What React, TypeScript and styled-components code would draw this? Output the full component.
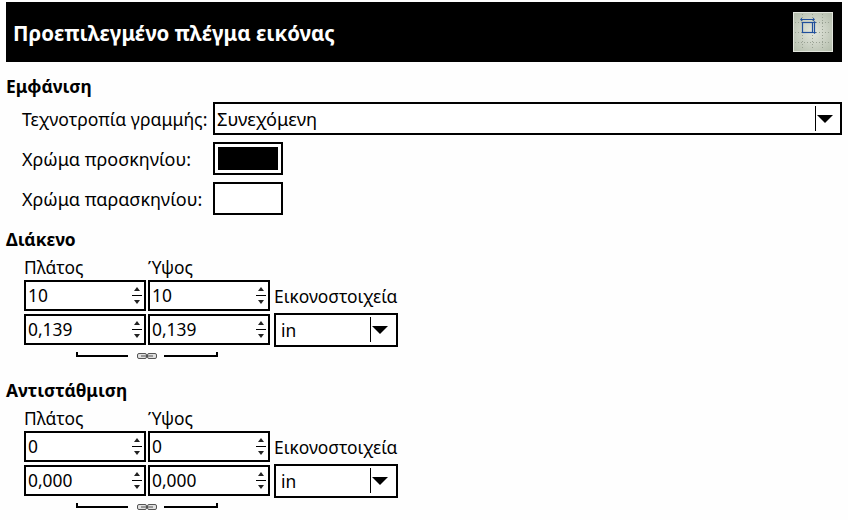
import * as React from 'react'
import styled, { createGlobalStyle } from 'styled-components'

const GlobalStyle = createGlobalStyle`
  html, body {
    margin: 0;
    padding: 0;
    background: #fefefe;
  }
  body {
    font-family: "Noto Sans", "DejaVu Sans", sans-serif;
    font-size: 17.4px;
    color: #000;
  }
`

const Page = styled.div`
  width: 848px;
  height: 520px;
  overflow: hidden;
  padding: 2px 6px 0;
  box-sizing: border-box;
`
const Header = styled.div`
  height: 60px;
  background: #000;
  display: flex;
  align-items: center;
  justify-content: space-between;
  padding: 0 9px 0 7px;
`
const HeaderTitle = styled.div`
  color: #fff;
  font-size: 20.5px;
  font-weight: 700;
  margin-top: 2px;
`
const SectionTitle = styled.div`
  font-weight: 700;
  font-size: 17.4px;
  line-height: 20px;
`
const Appearance = styled.div`
  margin-top: 14px;
`
const FormGrid = styled.div`
  display: grid;
  grid-template-columns: 191px 1fr;
  row-gap: 7px;
  margin-top: 6px;
  padding-left: 16px;
  align-items: center;
`
const FieldLabel = styled.div<{ $wide?: boolean }>`
  line-height: 20px;
  font-size: ${p => (p.$wide ? 18 : 17.6)}px;
`
const Combo = styled.div<{ $small?: boolean }>`
  height: ${p => (p.$small ? 34 : 33)}px;
  box-sizing: border-box;
  border: 2px solid #000;
  display: flex;
  align-items: center;
  justify-content: space-between;
  padding-left: ${p => (p.$small ? 5 : 2)}px;
  padding-right: ${p => (p.$small ? 8 : 7)}px;
  background: #fff;
  font-size: ${p => (p.$small ? 17.4 : 18.2)}px;
`
const ComboArrow = styled.div`
  display: flex;
  align-items: center;
  gap: 1px;
`
const ComboSep = styled.div`
  width: 1px;
  height: 25px;
  background: #000;
`
const Triangle = styled.div`
  width: 0;
  height: 0;
  border-left: 8px solid transparent;
  border-right: 8px solid transparent;
  border-top: 8px solid #000;
`
const ColorButton = styled.div<{ $dark?: boolean }>`
  width: 70px;
  height: 33px;
  box-sizing: border-box;
  border: 2px solid #000;
  padding: 3px;
  background: #fff;
  &::after {
    content: '';
    display: block;
    height: 100%;
    background: ${p => (p.$dark ? '#000' : '#fff')};
  }
`
const Section = styled.div<{ $top: number }>`
  margin-top: ${p => p.$top}px;
`
const SizeGrid = styled.div`
  display: grid;
  grid-template-columns: 124px 124px 126px;
  grid-template-rows: 20px 31px 31px;
  row-gap: 3px;
  margin-top: 8px;
  padding-left: 18px;
  align-items: center;
`
const ColumnLabel = styled.div`
  line-height: 20px;
`
const Spin = styled.div`
  width: 122px;
  height: 31px;
  box-sizing: border-box;
  border: 2px solid #000;
  display: flex;
  align-items: center;
  justify-content: space-between;
  padding-left: 2px;
  padding-right: 2px;
  background: #fff;
`
const SpinValue = styled.span`
  line-height: 20px;
  margin-top: -2px;
`
const SpinButtons = styled.div`
  display: flex;
  flex-direction: column;
  align-items: center;
  width: 10px;
  gap: 4px;
`
const SpinUp = styled.div`
  border-left: 3px solid transparent;
  border-right: 3px solid transparent;
  border-bottom: 4px solid #222;
`
const SpinDown = styled.div`
  border-left: 3px solid transparent;
  border-right: 3px solid transparent;
  border-top: 4px solid #222;
`
const SpinLine = styled.div`
  width: 10px;
  height: 1px;
  background: #000;
`
const UnitLabel = styled.div`
  line-height: 20px;
  margin-left: 2px;
  white-space: nowrap;
`
const UnitCell = styled.div`
  margin-left: 2px;
  width: 124px;
`
const ChainRow = styled.div`
  display: flex;
  align-items: center;
  width: 142px;
  margin: 7px 0 0 70px;
`
const ChainLine = styled.div<{ $side: 'left' | 'right' }>`
  flex: 0 0 ${p => (p.$side === 'left' ? 52 : 54)}px;
  height: 5px;
  box-sizing: border-box;
  border-bottom: 2px solid #000;
  ${p => (p.$side === 'left' ? 'border-left: 2px solid #000;' : 'border-right: 2px solid #000;')}
  margin-bottom: 3px;
`
const ChainIcon = styled.svg`
  width: 20px;
  height: 8px;
  margin: 0 7px 0 9px;
`

const GridIcon = () => (
  <svg width="40" height="40" viewBox="0 0 40 40">
    <defs>
      <radialGradient id="plate" cx="50%" cy="50%" r="65%">
        <stop offset="0%" stopColor="#e4e7de" />
        <stop offset="100%" stopColor="#b6bfae" />
      </radialGradient>
    </defs>
    <rect x="0.500" y="0.500" width="39" height="39" fill="url(#plate)" stroke="#e2e5dd" />
    <g stroke="#9aa294" strokeDasharray="1 2" strokeWidth="1">
      <path d="M9.500 2v36M19.500 2v36M29.500 2v36M2 10.500h36M2 20.500h36M2 30.500h36" />
    </g>
    <g fill="none" stroke="#1f4e9c">
      <rect x="9.500" y="10.500" width="10" height="10" strokeWidth="1.200" />
      <path d="M9 7.500h11M21.500 10v11" strokeWidth="1.200" />
    </g>
    <path d="M9 5.500v4l-2-2zM20 5.500v4l2-2zM19.500 11h4l-2-2zM19.500 20h4l-2 2z" fill="#1f4e9c" />
  </svg>
)

const Chain = () => (
  <ChainIcon viewBox="0 0 20 8">
    <g fill="#e0e0e0" stroke="#555" strokeWidth="1">
      <rect x="0.500" y="1.500" width="9" height="5" rx="1.500" />
      <rect x="10.500" y="1.500" width="9" height="5" rx="1.500" />
    </g>
    <path d="M4 4h12" stroke="#555" strokeWidth="1" />
  </ChainIcon>
)

const SpinBox = ({ value }: { value: string }) => (
  <Spin>
    <SpinValue>{value}</SpinValue>
    <SpinButtons>
      <SpinUp />
      <SpinLine />
      <SpinDown />
    </SpinButtons>
  </Spin>
)

const ComboBox = ({ value, small }: { value: string, small?: boolean }) => (
  <Combo $small={small}>
    <span>{value}</span>
    <ComboArrow>
      <ComboSep />
      <Triangle />
    </ComboArrow>
  </Combo>
)

const SizeSection = ({ title, top, px, inches }: { title: string, top: number, px: string, inches: string }) => (
  <Section $top={top}>
    <SectionTitle>{title}</SectionTitle>
    <SizeGrid>
      <ColumnLabel>Πλάτος</ColumnLabel>
      <ColumnLabel>Ύψος</ColumnLabel>
      <div />
      <SpinBox value={px} />
      <SpinBox value={px} />
      <UnitLabel>Εικονοστοιχεία</UnitLabel>
      <SpinBox value={inches} />
      <SpinBox value={inches} />
      <UnitCell><ComboBox value="in" small /></UnitCell>
    </SizeGrid>
    <ChainRow>
      <ChainLine $side="left" />
      <Chain />
      <ChainLine $side="right" />
    </ChainRow>
  </Section>
)

export default function App () {
  return (
    <Page>
      <GlobalStyle />
      <Header>
        <HeaderTitle>Προεπιλεγμένο πλέγμα εικόνας</HeaderTitle>
        <GridIcon />
      </Header>
      <Appearance>
        <SectionTitle>Εμφάνιση</SectionTitle>
        <FormGrid>
          <FieldLabel>Τεχνοτροπία γραμμής:</FieldLabel>
          <ComboBox value="Συνεχόμενη" />
          <FieldLabel $wide>Χρώμα προσκηνίου:</FieldLabel>
          <ColorButton $dark />
          <FieldLabel $wide>Χρώμα παρασκηνίου:</FieldLabel>
          <ColorButton />
        </FormGrid>
      </Appearance>
      <SizeSection title="Διάκενο" top={14} px="10" inches="0,139" />
      <SizeSection title="Αντιστάθμιση" top={20} px="0" inches="0,000" />
    </Page>
  )
}
